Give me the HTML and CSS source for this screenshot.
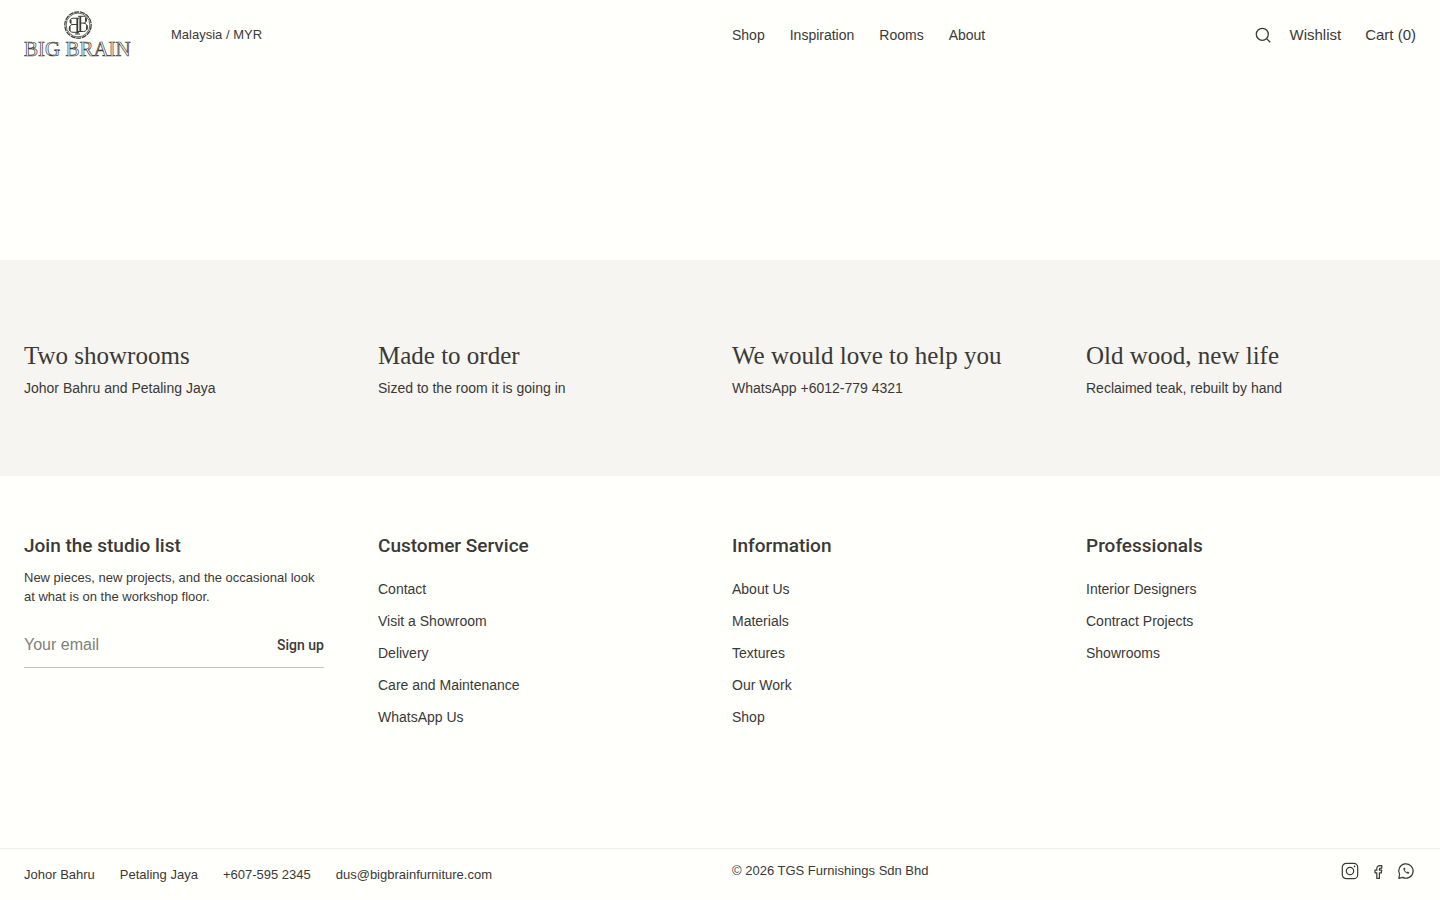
FILE: index.html
```html
<!DOCTYPE html>
<html lang="en">
<head>
<meta charset="utf-8">
<meta name="viewport" content="width=device-width, initial-scale=1">
<title>Big Brain</title>
<link rel="stylesheet" href="styles.css">
</head>
<body>
<header class="header grid">
  <div class="header-left">
    <a class="logo" href="#" aria-label="Big Brain home">
      <svg width="112" height="54" viewBox="0 0 112 54" fill="none" stroke="currentColor">
        <circle cx="54" cy="17" r="13.200" stroke-width="1.200" stroke-dasharray="5 .8"/>
        <circle cx="54" cy="17" r="11.900" stroke-width=".8"/>
        <path d="M56.300 8.500v15" stroke-width="1.800"/>
        <path d="M54 8.300h5.500c4 0 4 6.800 0 6.800h-3M59.500 15.100c5 0 5 8.400 0 8.400H54" stroke-width="1"/>
        <path d="M61.800 10v3.500M62.900 17.300v4.200" stroke-width="1.500"/>
        <path d="M53.300 10v15.500" stroke-width="1.800"/>
        <path d="M55 10.200h-6c-4 0-4 6.300 0 6.300h4M49 16.500c-5 0-5 7.800 0 7.800h6M51 26h5" stroke-width="1"/>
        <path d="M46.800 11.700v3.300M45.800 18.500v4" stroke-width="1.500"/>
        <text class="logo-text" x="0" y="48">BIG BRAIN</text>
      </svg>
    </a>
    <button class="region" type="button">Malaysia / MYR</button>
  </div>
  <nav class="nav" aria-label="Main">
    <a href="#">Shop</a><a href="#">Inspiration</a><a href="#">Rooms</a><a href="#">About</a>
  </nav>
  <div class="tools">
    <button class="search" type="button" aria-label="Search">
      <svg width="16" height="16" viewBox="0 0 16 16" fill="none" stroke="currentColor" stroke-width="1.300"><circle cx="7.300" cy="7.300" r="6"/><path d="M11.600 11.600l3.600 3.600"/></svg>
    </button>
    <a href="#">Wishlist</a>
    <a href="#">Cart (0)</a>
  </div>
</header>
<main class="main"></main>
<section class="band grid">
  <div><h2 class="band-title">Two showrooms</h2><p class="band-text">Johor Bahru and Petaling Jaya</p></div>
  <div><h2 class="band-title">Made to order</h2><p class="band-text">Sized to the room it is going in</p></div>
  <div><h2 class="band-title">We would love to help you</h2><p class="band-text">WhatsApp +6012-779 4321</p></div>
  <div><h2 class="band-title">Old wood, new life</h2><p class="band-text">Reclaimed teak, rebuilt by hand</p></div>
</section>
<footer class="footer">
  <div class="footer-cols grid">
    <div class="join">
      <h3 class="footer-title">Join the studio list</h3>
      <p class="join-text">New pieces, new projects, and the occasional look at what is on the workshop floor.</p>
      <form class="join-form">
        <input class="email" type="email" placeholder="Your email" aria-label="Your email">
        <button class="signup" type="submit">Sign up</button>
      </form>
    </div>
    <div>
      <h3 class="footer-title">Customer Service</h3>
      <ul class="links">
        <li><a href="#">Contact</a></li><li><a href="#">Visit a Showroom</a></li><li><a href="#">Delivery</a></li><li><a href="#">Care and Maintenance</a></li><li><a href="#">WhatsApp Us</a></li>
      </ul>
    </div>
    <div>
      <h3 class="footer-title">Information</h3>
      <ul class="links">
        <li><a href="#">About Us</a></li><li><a href="#">Materials</a></li><li><a href="#">Textures</a></li><li><a href="#">Our Work</a></li><li><a href="#">Shop</a></li>
      </ul>
    </div>
    <div>
      <h3 class="footer-title">Professionals</h3>
      <ul class="links">
        <li><a href="#">Interior Designers</a></li><li><a href="#">Contract Projects</a></li><li><a href="#">Showrooms</a></li>
      </ul>
    </div>
  </div>
  <div class="bottom grid">
    <div class="contacts">
      <a href="#">Johor Bahru</a><a href="#">Petaling Jaya</a><a href="#">+607-595 2345</a><a href="#">dus@bigbrainfurniture.com</a>
    </div>
    <p class="copyright">© 2026 TGS Furnishings Sdn Bhd</p>
    <div class="social">
      <a href="#" aria-label="Instagram"><svg width="20" height="20" viewBox="0 0 20 20" fill="none" stroke="currentColor" stroke-width="1.200"><rect x="2.300" y="2.300" width="15.400" height="15.400" rx="4"/><circle cx="10" cy="10" r="3.700"/><circle cx="14.600" cy="5.400" r=".6" fill="currentColor" stroke-width=".6"/></svg></a>
      <a href="#" aria-label="Facebook"><svg width="20" height="20" viewBox="0 0 20 20" fill="none" stroke="currentColor" stroke-width="1.200" stroke-linejoin="round"><path d="M8.800 17.300v-5.500H7V9.200h1.800V7.800c0-2.100 1.200-3.200 3.200-3.200h1.800v2.500h-1.300c-.8 0-1.100.4-1.100 1.100v1h2.300l-.4 2.600h-1.900v5.500z"/></svg></a>
      <a href="#" aria-label="WhatsApp"><svg width="20" height="20" viewBox="0 0 20 20" fill="none" stroke="currentColor" stroke-width="1.200" stroke-linejoin="round"><path d="M2.800 17.400l.8-3.900a7.200 7.200 0 1 1 3 2.900z"/><path d="M7.600 7c-.4 2.600 2.200 5.500 5.200 5.600l.4-1-1.500-.9-.8.700c-1.200-.5-1.900-1.200-2.300-2.300l.6-.8L8.500 6.700z" fill="currentColor" stroke-width=".3"/></svg></a>
    </div>
  </div>
</footer>
</body>
</html>
```
FILE: styles.css
```css
* { box-sizing: border-box; }
body { margin: 0; min-height: 100vh; display: flex; flex-direction: column; background: #fffffc; color: #3a3937; font: 14px/20px "Liberation Sans", Arial, sans-serif; }
h2, h3, p, ul { margin: 0; padding: 0; }
a { color: inherit; text-decoration: none; }
button, input { padding: 0; border: 0; background: none; color: inherit; font: inherit; }
button { cursor: pointer; }
svg { display: block; }
.grid { display: grid; grid-template-columns: repeat(4, minmax(0, 1fr)); column-gap: 24px; padding-inline: 24px; }
.header { align-items: center; padding-block: 8px 6px; }
.header-left { grid-column: span 2; display: flex; align-items: center; gap: 35px; }
.logo-text { font: 21px "Liberation Serif", serif; stroke-width: .7px; }
.region { font-size: 13px; }
.nav { display: flex; gap: 25px; }
.tools { display: flex; justify-content: flex-end; align-items: center; gap: 24px; font-size: 15px; }
.search { margin-right: -6px; }
.main { flex: 1; min-height: 160px; }
.band { padding-block: 80px; background: #f6f5f1; }
.band-title { font: 400 25px/32px "Liberation Serif", serif; }
.band-text { line-height: 24px; padding-top: 4px; margin-bottom: -4px; }
.footer-cols { padding-top: 56px; padding-bottom: 121px; }
.footer-title { font: 500 19px/28px Roboto, sans-serif; }
.join { max-width: 300px; }
.join-text { margin-top: 8px; font-size: 13px; line-height: 19px; }
.join-form { display: flex; align-items: center; margin-top: 16px; height: 46px; border-bottom: 1px solid #c6c5c2; }
.email { flex: 1; min-width: 0; font-size: 16px; outline: 0; }
.email::placeholder { color: #80807d; opacity: 1; }
.signup { font-family: Roboto, sans-serif; font-weight: 500; }
.links { display: grid; gap: 12px; margin-top: 19px; list-style: none; }
.bottom { padding-top: 12px; padding-bottom: 15px; border-top: 1px solid #eeeeeb; font-size: 13px; }
.contacts { grid-column: span 2; display: flex; gap: 25px; padding-top: 4px; }
.social { display: flex; justify-content: flex-end; gap: 8px; }
```
